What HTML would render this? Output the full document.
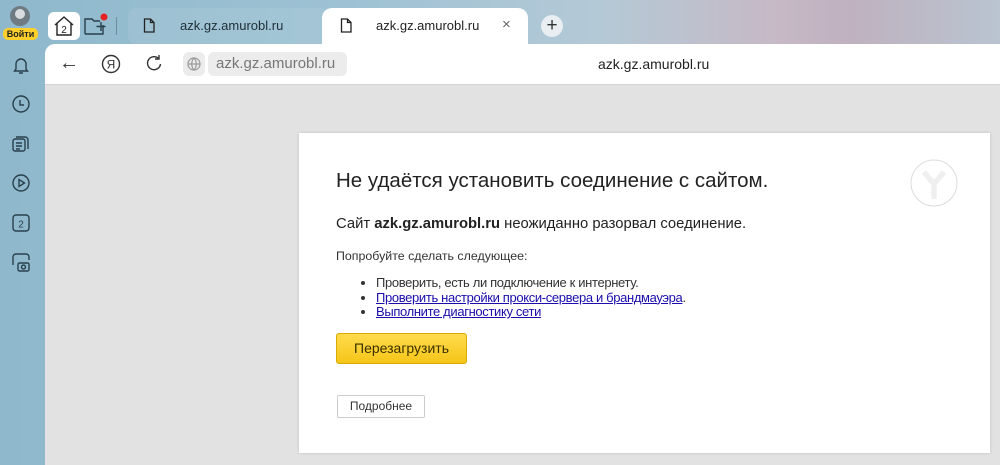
<!DOCTYPE html>
<html><head><meta charset="utf-8"><style>
*{margin:0;padding:0;box-sizing:border-box}
body{width:1000px;height:465px;overflow:hidden;font-family:"Liberation Sans",Arial,sans-serif;position:relative;
background:linear-gradient(90deg,#8fb8cc 0%,#9ec2d4 35%,#b4c9d6 60%,#c6b9c5 78%,#bfb1bf 85%,#b9c4d0 100%)}
.abs{position:absolute}
.side svg{position:absolute;left:10px}
.tabin{left:128px;top:8px;width:200px;height:36px;background:rgba(255,255,255,0.08);border-radius:8px}
.tab{left:322px;top:8px;width:206px;height:40px;background:#fff;border-radius:10px 10px 0 0}
.addr{left:45px;top:44px;width:955px;height:40px;background:#fff;border-radius:10px 0 0 0}
.content{left:45px;top:84px;width:955px;height:381px;background:#e2e2e2;border-top:1px solid #d4d4d4}
.card{left:299px;top:133px;width:691px;height:320px;background:#fff;box-shadow:0 0 3px rgba(0,0,0,.15)}
a{color:#1a0dab;text-decoration:underline}
</style></head><body>
<div class="abs" style="left:10px;top:6px;width:20px;height:20px;border-radius:50%;background:#6f7b82"></div>
<div class="abs" style="left:15px;top:9px;width:10px;height:10px;border-radius:50%;background:#d8dcdf"></div>
<div class="abs" style="left:3px;top:28px;width:35px;height:12px;border-radius:5px;background:#ffd02b;font-size:9px;font-weight:bold;color:#222;text-align:center;line-height:12px">Войти</div>
<div class="side">
<svg style="top:54px" width="22" height="22" viewBox="0 0 22 22" fill="none" stroke="#28404c" stroke-width="1.4"><path d="M6 15V10a5 5 0 0 1 10 0v5l1.5 2h-13z M9 19h4"/></svg>
<svg style="top:93px" width="22" height="22" viewBox="0 0 22 22" fill="none" stroke="#28404c" stroke-width="1.4"><circle cx="11" cy="11" r="8"/><path d="M10 7v5h4"/></svg>
<svg style="top:133px" width="22" height="22" viewBox="0 0 22 22" fill="none" stroke="#28404c" stroke-width="1.4"><rect x="3" y="6" width="12" height="12" rx="2"/><path d="M6 4h9a3 3 0 0 1 3 3v9 M6 10h6 M6 13h6 M6 16h4"/></svg>
<svg style="top:172px" width="22" height="22" viewBox="0 0 22 22" fill="none" stroke="#28404c" stroke-width="1.4"><circle cx="11" cy="11" r="8"/><path d="M9 7.5v7l5.5-3.5z"/></svg>
<svg style="top:212px" width="22" height="22" viewBox="0 0 22 22" fill="none" stroke="#28404c" stroke-width="1.4"><rect x="3" y="3" width="16" height="16" rx="3"/><text x="11" y="15.5" font-size="10" text-anchor="middle" fill="#28404c" stroke="none" font-family="Liberation Sans">2</text></svg>
<svg style="top:251px" width="22" height="22" viewBox="0 0 22 22" fill="none" stroke="#28404c" stroke-width="1.4"><path d="M3 14V6a3 3 0 0 1 3-3h10a3 3 0 0 1 3 3v3"/><rect x="8" y="12" width="11" height="8" rx="1.5"/><circle cx="13.5" cy="16" r="2"/></svg>
</div>
<div class="abs" style="left:48px;top:12px;width:32px;height:28px;background:#fff;border-radius:6px"></div>
<svg class="abs" style="left:52px;top:14px" width="24" height="24" viewBox="0 0 24 24" fill="none" stroke="#222" stroke-width="1.4"><path d="M3 11L12 3l9 8 M5 9v12h14V9"/><text x="12" y="19" font-size="10" text-anchor="middle" fill="#222" stroke="none" font-family="Liberation Sans">2</text></svg>
<svg class="abs" style="left:83px;top:12px" width="28" height="26" viewBox="0 0 28 26" fill="none" stroke="#28404c" stroke-width="1.4"><path d="M2 22V7h7l2 2h6 M2 22h18v-9 M18 10v9 M13.5 14.5h9"/><circle cx="21" cy="5" r="3.5" fill="#e52222" stroke="none"/></svg>
<div class="abs" style="left:116px;top:17px;width:1px;height:18px;background:#6c8c9c"></div>
<div class="abs tabin"></div>
<svg class="abs" style="left:143px;top:18px" width="12" height="15" viewBox="0 0 12 15" fill="none" stroke="#222" stroke-width="1.3"><path d="M1.5 1h6l3.5 3.5v9.5h-9.5z M7.5 1v3.5h3.5"/></svg>
<div class="abs" style="left:180px;top:18px;font-size:13px;color:#1e2e38">azk.gz.amurobl.ru</div>
<div class="abs tab"></div>
<svg class="abs" style="left:340px;top:18px" width="12" height="15" viewBox="0 0 12 15" fill="none" stroke="#222" stroke-width="1.3"><path d="M1.5 1h6l3.5 3.5v9.5h-9.5z M7.5 1v3.5h3.5"/></svg>
<div class="abs" style="left:376px;top:18px;font-size:13px;color:#222">azk.gz.amurobl.ru</div>
<div class="abs" style="left:502px;top:16px;font-size:15px;color:#666">×</div>
<div class="abs" style="left:541px;top:15px;width:22px;height:22px;border-radius:50%;background:#e8eef2;text-align:center;line-height:21px;font-size:19px;color:#333">+</div>
<div class="abs addr"></div>
<div class="abs" style="left:59px;top:52px;font-size:20px;color:#333">←</div>
<svg class="abs" style="left:100px;top:53px" width="22" height="22" viewBox="0 0 22 22"><circle cx="11" cy="11" r="8.5" fill="none" stroke="#333" stroke-width="1.4"/><text x="11" y="15.5" font-size="12" text-anchor="middle" fill="#333" font-family="Liberation Sans">Я</text></svg>
<svg class="abs" style="left:144px;top:53px" width="20" height="20" viewBox="0 0 20 20" fill="none" stroke="#333" stroke-width="1.4"><path d="M15 6A6.5 6.5 0 1 0 16.5 11 M15 2v4h-4"/></svg>
<div class="abs" style="left:183px;top:52px;width:22px;height:24px;background:#ececec;border-radius:6px"></div>
<svg class="abs" style="left:186px;top:56px" width="16" height="16" viewBox="0 0 16 16" fill="none" stroke="#999" stroke-width="1.2"><circle cx="8" cy="8" r="6"/><path d="M2 8h12 M8 2c-3 3-3 9 0 12 M8 2c3 3 3 9 0 12"/></svg>
<div class="abs" style="left:208px;top:52px;width:139px;height:24px;background:#ececec;border-radius:6px;font-size:15px;color:#777;padding:3px 0 0 8px">azk.gz.amurobl.ru</div>
<div class="abs" style="left:598px;top:56px;font-size:14px;color:#222">azk.gz.amurobl.ru</div>
<div class="abs content"></div>
<div class="abs card"></div>
<svg class="abs" style="left:909px;top:159px" width="50" height="50" viewBox="0 0 50 50"><circle cx="25" cy="24" r="23" fill="#fff" stroke="#dcdcdc" stroke-width="1"/><path d="M15 13l10 12 10-12 M25 25v15" fill="none" stroke="#efefef" stroke-width="5.5"/></svg>
<div class="abs" style="left:336px;top:169px;font-size:20.5px;color:#222">Не удаётся установить соединение с сайтом.</div>
<div class="abs" style="left:336px;top:216px;font-size:14.8px;color:#222">Сайт <b>azk.gz.amurobl.ru</b> неожиданно разорвал соединение.</div>
<div class="abs" style="left:336px;top:249px;font-size:12.4px;color:#333">Попробуйте сделать следующее:</div>
<ul class="abs" style="left:376px;top:276px;font-size:13px;letter-spacing:-0.35px;color:#333;line-height:14.5px;list-style:disc;white-space:nowrap">
<li>Проверить, есть ли подключение к интернету.</li>
<li><a>Проверить настройки прокси-сервера и брандмауэра</a>.</li>
<li><a>Выполните диагностику сети</a></li>
</ul>
<div class="abs" style="left:336px;top:333px;width:131px;height:31px;background:linear-gradient(#ffdb4d,#f5c518);border:1px solid #d9ab00;border-radius:3px;font-size:14px;color:#3a3000;text-align:center;line-height:29px">Перезагрузить</div>
<div class="abs" style="left:337px;top:395px;width:88px;height:23px;border:1px solid #ccc;border-radius:2px;background:#fff;font-size:12px;color:#333;text-align:center;line-height:21px">Подробнее</div>
</body></html>
